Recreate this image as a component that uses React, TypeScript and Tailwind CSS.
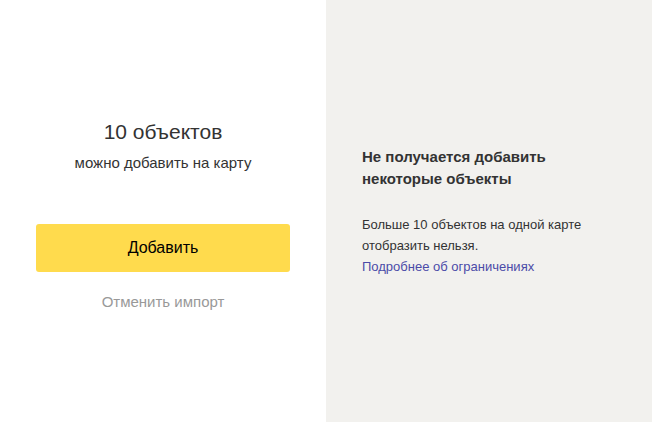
export default function App() {
  return (
    <div className="flex h-[422px] w-[652px] font-['Liberation_Sans',Arial,sans-serif]">
      {/* left: summary and actions */}
      <div className="flex w-[326px] flex-col items-center bg-white px-9 pt-[120px]">
        <div className="text-[21px] leading-6 text-[#333]">10 объектов</div>
        <div className="mt-[9px] text-[15px] leading-5 text-[#333]">можно добавить на карту</div>
        <button className="mt-[51px] h-12 w-full rounded-[3px] bg-[#ffdb4d] text-[16px] text-black">
          Добавить
        </button>
        <button className="mt-[20px] text-[15px] leading-5 text-[#999]">Отменить импорт</button>
      </div>

      {/* right: warning */}
      <div className="flex-1 bg-[#f2f1ee] px-9 pt-[146px]">
        <div className="text-[15px] font-bold leading-[22px] text-[#333]">
          Не получается добавить
          <br />
          некоторые объекты
        </div>
        <div className="mt-[24px] text-[13px] leading-[21px] text-[#333]">
          Больше 10 объектов на одной карте
          <br />
          отобразить нельзя.
        </div>
        <a href="#" className="block text-[13px] leading-[21px] text-[#4b4ba8]">
          Подробнее об ограничениях
        </a>
      </div>
    </div>
  );
}
